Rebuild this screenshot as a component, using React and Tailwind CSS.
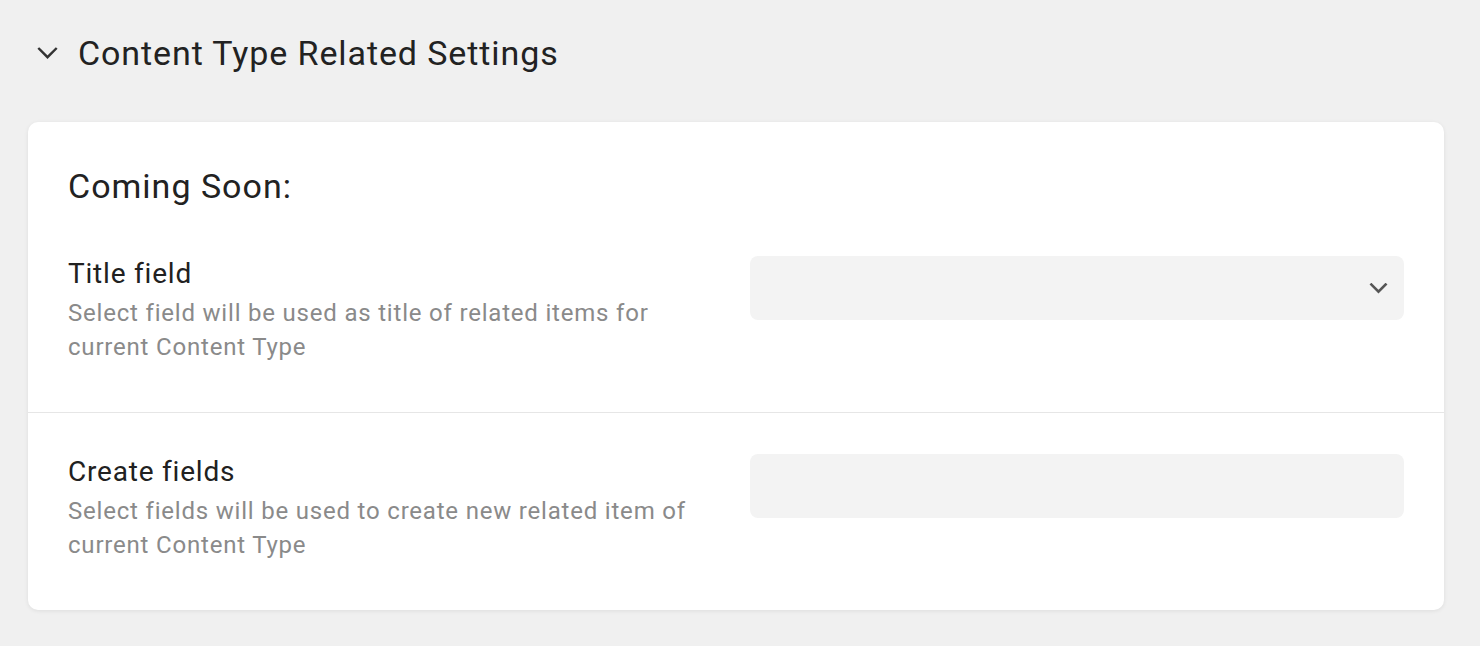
import React from 'react';

const FONT = { fontFamily: 'Roboto, "Noto Sans", sans-serif' };

function Chevron({ className, width = '2.6' }) {
  return (
    <svg viewBox="0 0 24 14" className={className} fill="none" stroke="currentColor" strokeWidth={width} strokeLinecap="square">
      <polyline points="3,2 12,11 21,2" />
    </svg>
  );
}

function SettingRow({ label, description, children, divider }) {
  return (
    <div className={`grid grid-cols-2 gap-7 px-10 ${divider ? 'border-t border-[#e6e6e6] pt-[41px] pb-12' : 'pb-12'}`}>
      <div>
        <div className="text-[28px] leading-[36px] tracking-[0.8px] text-[#212121]">{label}</div>
        <div className="mt-1 text-[24px] leading-[34px] tracking-[0.8px] text-[#8a8a8a]">{description}</div>
      </div>
      <div>{children}</div>
    </div>
  );
}

export default function App() {
  return (
    <div className="min-h-screen bg-[#f0f0f0] pl-7 pr-9 pb-9" style={FONT}>
      <div className="flex h-[106px] items-center">
        <Chevron className="ml-[8px] h-[13px] w-[23px] text-[#333]" />
        <h2 className="ml-[19px] text-[34px] leading-[40px] tracking-[0.9px] text-[#222]">Content Type Related Settings</h2>
      </div>
      <div className="mt-4 rounded-[10px] bg-white shadow-[0_1px_4px_rgba(0,0,0,0.08)]">
        <div className="px-10 pt-[44px] pb-[50px] text-[34px] leading-[40px] tracking-[1px] text-[#222]">Coming Soon:</div>
        <SettingRow
          label="Title field"
          description="Select field will be used as title of related items for current Content Type"
        >
          <div className="flex h-16 items-center justify-end rounded-lg bg-[#f3f3f3] pr-[16px]">
            <Chevron className="h-[11px] w-[19px] text-[#555]" width="3.4" />
          </div>
        </SettingRow>
        <SettingRow
          divider
          label="Create fields"
          description="Select fields will be used to create new related item of current Content Type"
        >
          <div className="h-16 rounded-lg bg-[#f3f3f3]" />
        </SettingRow>
      </div>
    </div>
  );
}
